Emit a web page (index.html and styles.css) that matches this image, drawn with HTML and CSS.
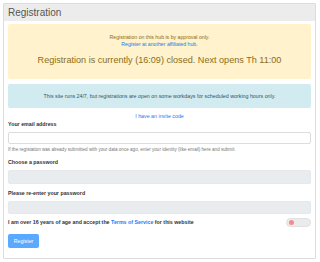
FILE: index.html
```html
<!DOCTYPE html>
<html>
<head>
<meta charset="utf-8">
<link rel="stylesheet" href="styles.css">
</head>
<body>
<div class="card">
  <div class="card-header">Registration</div>
  <div class="card-body">
    <div class="alert alert-warning">
      <div class="small-line">Registration on this hub is by approval only.</div>
      <div class="small-line"><a href="#">Register at another affiliated hub.</a></div>
      <div class="big-line">Registration is currently (16:09) closed. Next opens Th 11:00</div>
    </div>
    <div class="alert alert-info">This site runs 24/7, but registrations are open on some workdays for scheduled working hours only.</div>
    <div class="invite"><a href="#">I have an invite code</a></div>
    <div class="field">
      <label class="label">Your email address</label>
      <div class="input"></div>
      <div class="help">If the registation was already submitted with your data once ago, enter your identity (like email) here and submit</div>
    </div>
    <div class="field">
      <label class="label">Choose a password</label>
      <div class="input disabled"></div>
    </div>
    <div class="field">
      <label class="label">Please re-enter your password</label>
      <div class="input disabled"></div>
    </div>
    <div class="tos">
      <span class="tos-text">I am over 16 years of age and accept the <a href="#">Terms of Service</a> for this website</span>
      <span class="toggle"><span class="knob"></span></span>
    </div>
    <button class="btn">Register</button>
  </div>
</div>
</body>
</html>
```
FILE: styles.css
```css
* { box-sizing: border-box; }
html, body { margin: 0; padding: 0; background: #fff; }
body {
  padding: 3px 4px 0 3px;
  font-family: "Liberation Sans", Arial, sans-serif;
  color: #333;
}
a { color: #1a7cf0; text-decoration: none; }
.card {
  width: 313px;
  height: 256px;
  border: 1px solid #dcdcdc;
  border-radius: 1px;
  background: #fff;
}
.card-header {
  background: #ececec;
  height: 17px;
  padding: 0 0 0 4px;
  font-size: 10px;
  line-height: 17px;
  color: #555;
}
.card-body {
  padding: 3px 4px 0 4px;
}
.alert {
  border-radius: 2px;
  text-align: center;
}
.alert-warning {
  background: #fff2cc;
  color: #8a6d1a;
  height: 55px;
  padding-top: 10px;
}
.small-line {
  font-size: 5.2px;
  line-height: 7px;
}
.big-line {
  font-size: 9.1px;
  line-height: 11px;
  margin-top: 7px;
}
.alert-info {
  margin-top: 5px;
  background: #d2ebf0;
  color: #2f5560;
  height: 24px;
  font-size: 5.3px;
  line-height: 24px;
}
.invite {
  text-align: center;
  font-size: 5.3px;
  line-height: 7px;
  margin-top: 4.5px;
}
.field { display: flex; flex-direction: column; }
.label {
  font-size: 5.3px;
  font-weight: bold;
  line-height: 7px;
  margin-top: 1.5px;
  color: #333;
}
.input {
  margin-top: 4px;
  height: 11.5px;
  border: 1px solid #dcdcdc;
  border-radius: 2px;
  background: #fff;
}
.input.disabled {
  background: #e9ecef;
  border-color: #e6e8ea;
  height: 13.5px;
}
.help {
  font-size: 4.6px;
  line-height: 7px;
  color: #777;
  margin-top: 2.5px;
}
.field + .field .label { margin-top: 6px; }
.tos {
  display: flex;
  align-items: center;
  justify-content: space-between;
  margin-top: 3.5px;
  font-size: 5.3px;
  font-weight: bold;
  color: #333;
}
.toggle {
  width: 25px;
  height: 9px;
  border-radius: 5px;
  background: #ebebeb;
  border: 1px solid #e0e0e0;
  display: flex;
  align-items: center;
  padding-left: 2px;
}
.knob {
  width: 5px;
  height: 5px;
  border-radius: 50%;
  background: #f28b8b;
}
.btn {
  margin-top: 7px;
  display: block;
  width: 31px;
  height: 14px;
  padding: 0;
  border: none;
  border-radius: 2px;
  background: #5aa9ff;
  color: #fff;
  font-family: "Liberation Sans", Arial, sans-serif;
  font-size: 5.3px;
}
```
